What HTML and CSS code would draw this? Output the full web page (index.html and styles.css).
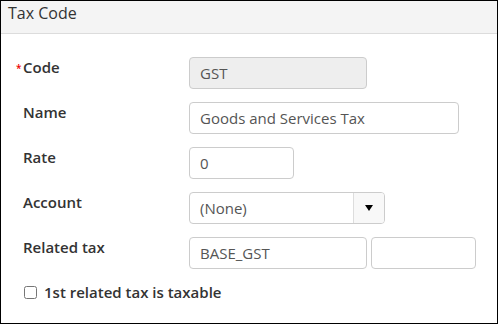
FILE: index.html
```html
<!DOCTYPE html>
<html lang="en">
<head>
    <meta charset="UTF-8">
    <meta name="viewport" content="width=device-width, initial-scale=1.0">
    <title>Tax Code</title>
    <link rel="stylesheet" href="styles.css">
</head>
<body>
    <div class="panel">
        <div class="panel-heading">Tax Code</div>
        <form class="panel-body">
            <div class="row">
                <label class="field-label"><span class="req">*</span>Code</label>
                <input type="text" class="field w-md" value="GST" readonly>
            </div>
            <div class="row">
                <label class="field-label">Name</label>
                <input type="text" class="field w-lg" value="Goods and Services Tax">
            </div>
            <div class="row">
                <label class="field-label">Rate</label>
                <input type="text" class="field w-sm" value="0">
            </div>
            <div class="row">
                <label class="field-label">Account</label>
                <div class="select">
                    <span class="select-text">(None)</span>
                    <span class="select-btn"><span class="caret"></span></span>
                </div>
            </div>
            <div class="row">
                <label class="field-label">Related tax</label>
                <div class="pair">
                    <input type="text" class="field w-md" value="BASE_GST">
                    <input type="text" class="field w-sm" value="">
                </div>
            </div>
            <label class="check">
                <input type="checkbox">
                <span>1st related tax is taxable</span>
            </label>
        </form>
    </div>
</body>
</html>
```

FILE: styles.css
```css
html {
  font-family: "Open Sans", sans-serif;
}

body {
  margin: 0;
  background-color: #fff;
}

.panel {
  box-sizing: border-box;
  width: 498px;
  height: 324px;
  border: 1px solid #000;
  background-color: #fff;
}

.panel-heading {
  height: 33px;
  box-sizing: border-box;
  padding: 1px 7px 0;
  line-height: 22px;
  font-size: 16px;
  color: #333;
  background-color: #f4f4f4;
  border-bottom: 1px solid #dcdcdc;
}

.panel-body {
  display: flex;
  flex-direction: column;
  gap: 13px;
  padding: 23px 0 0 22px;
  margin: 0;
}

.row {
  display: flex;
  align-items: flex-start;
}

.field-label {
  width: 166px;
  font-size: 15px;
  line-height: 20px;
  font-weight: 600;
  color: #333;
}

.req {
  display: inline-block;
  width: 7px;
  margin-left: -7px;
  font-size: 10px;
  color: #e00;
  vertical-align: 1px;
}

.field {
  box-sizing: border-box;
  height: 32px;
  margin: 0;
  padding: 0 10px;
  font-family: "Open Sans", sans-serif;
  font-size: 15px;
  color: #555;
  border: 1px solid #ccc;
  border-radius: 4px;
  background-color: #fff;
  outline: none;
}

.field[readonly] {
  background-color: #eee;
}

.w-sm {
  width: 105px;
}

.w-md {
  width: 178px;
}

.w-lg {
  width: 270px;
}

.pair {
  display: flex;
  gap: 4px;
}

.select {
  box-sizing: border-box;
  display: flex;
  width: 196px;
  height: 32px;
  border: 1px solid #ccc;
  border-radius: 4px;
  overflow: hidden;
}

.select-text {
  flex: 1;
  padding-left: 10px;
  line-height: 30px;
  font-size: 15px;
  color: #555;
}

.select-btn {
  width: 30px;
  display: flex;
  align-items: center;
  justify-content: center;
  background-color: #f8f8f8;
  border-left: 1px solid #ddd;
}

.caret {
  width: 0;
  height: 0;
  border-left: 4px solid transparent;
  border-right: 4px solid transparent;
  border-top: 6px solid #000;
}

.check {
  display: flex;
  align-items: center;
  gap: 7px;
  font-size: 15px;
  line-height: 20px;
  font-weight: 600;
  color: #333;
}

.check input {
  width: 13px;
  height: 13px;
  margin: 0 0 0 1px;
}
```
